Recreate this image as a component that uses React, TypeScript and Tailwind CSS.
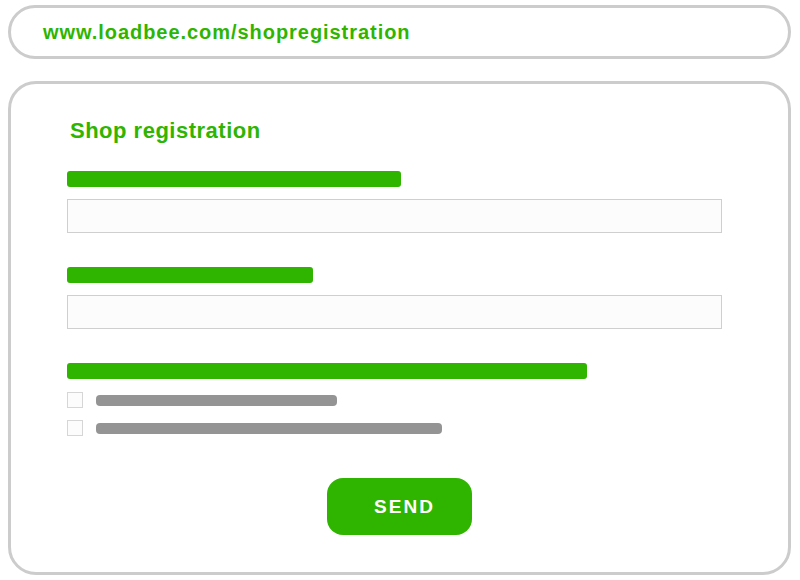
const font = { fontFamily: '"Liberation Sans", Arial, sans-serif' };

function GreenBar({ width }: { width: string }) {
  return <div className={`h-[16px] ${width} rounded-[3px] bg-[#2fb500]`} />;
}

function TextInput() {
  return <div className="h-[34px] w-[655px] border border-[#cfcfcf] bg-[#fcfcfc]" />;
}

function CheckRow({ width }: { width: string }) {
  return (
    <div className="flex items-center gap-[13px]">
      <div className="h-[16px] w-[16px] border border-[#d6d6d6] bg-[#fcfcfc]" />
      <div className={`h-[11px] ${width} rounded-[4px] bg-[#949494]`} />
    </div>
  );
}

export default function App() {
  return (
    <div className="flex h-[580px] w-[800px] flex-col bg-white pl-[8px] pt-[5px]" style={font}>
      <div className="flex h-[54px] w-[783px] items-center rounded-full border-[3px] border-[#cccccc] pl-[32px]">
        <span className="text-[20px] font-bold leading-none tracking-[0.95px] text-[#2fb500]">
          www.loadbee.com/shopregistration
        </span>
      </div>

      <div className="mt-[22px] flex h-[494px] w-[783px] flex-col rounded-[28px] border-[3px] border-[#cccccc]">
        <div className="flex flex-col pl-[56px] pt-[36px]">
          <h1 className="pl-[3px] text-[22px] font-bold leading-none tracking-[0.5px] text-[#2fb500]">
            Shop registration
          </h1>

          <div className="mt-[29px] flex flex-col gap-[12px]">
            <GreenBar width="w-[334px]" />
            <TextInput />
          </div>

          <div className="mt-[34px] flex flex-col gap-[12px]">
            <GreenBar width="w-[246px]" />
            <TextInput />
          </div>

          <div className="mt-[34px] flex flex-col">
            <GreenBar width="w-[520px]" />
            <div className="mt-[13px] flex flex-col gap-[12px]">
              <CheckRow width="w-[241px]" />
              <CheckRow width="w-[346px]" />
            </div>
          </div>
        </div>

        <div className="mt-[42px] flex justify-center">
          <button className="flex h-[57px] w-[145px] items-center justify-center rounded-[16px] bg-[#2fb500] pl-[10px] text-[19px] font-bold leading-none tracking-[2px] text-white">
            SEND
          </button>
        </div>
      </div>
    </div>
  );
}
